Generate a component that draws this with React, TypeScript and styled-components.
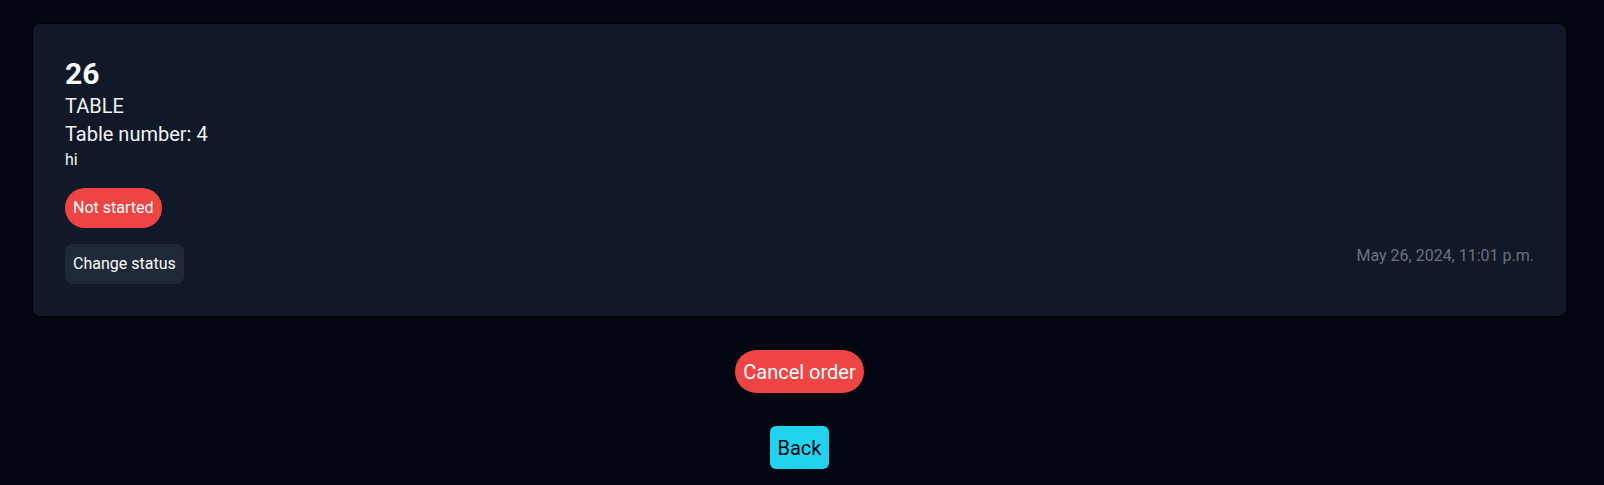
import React from "react";
import styled, { createGlobalStyle } from "styled-components";

const Global = createGlobalStyle`
  html, body {
    margin: 0;
    padding: 0;
    background: #030712;
  }
  body {
    font-family: Roboto, "Noto Sans", Arial, sans-serif;
    color: #f3f4f6;
  }
  * { box-sizing: border-box; }
`;

const Page = styled.main`
  min-height: 485px;
  padding: 23px 37px 16px 32px;
  display: flex;
  flex-direction: column;
  align-items: center;
`;

const Card = styled.section`
  align-self: stretch;
  background: #111827;
  border: 1px solid #000;
  border-radius: 8px;
  padding: 32px;
  display: flex;
  flex-direction: column;
`;

const Number = styled.h2`
  margin: 0;
  font-size: 30px;
  line-height: 36px;
  font-weight: 700;
  color: #f9fafb;
`;

const Line = styled.p<{ $size: number; $lh: number }>`
  margin: 0;
  font-size: ${(p) => p.$size}px;
  line-height: ${(p) => p.$lh}px;
  color: #f3f4f6;
`;

const Pill = styled.span`
  align-self: flex-start;
  margin-top: 16px;
  background: #ef4444;
  color: #fff;
  border-radius: 9999px;
  padding: 8px;
  font-size: 16px;
  line-height: 24px;
`;

const Footer = styled.div`
  margin-top: 16px;
  display: flex;
  justify-content: space-between;
  align-items: flex-start;
`;

const StatusButton = styled.button`
  background: #1f2937;
  color: #f9fafb;
  border: none;
  border-radius: 8px;
  padding: 8px;
  font-family: inherit;
  font-size: 16px;
  line-height: 24px;
  cursor: pointer;
`;

const DateText = styled.span`
  color: #6b7280;
  font-size: 16px;
  line-height: 24px;
`;

const ActionButton = styled.button<{ $variant: "danger" | "back" }>`
  margin-top: 33px;
  border: none;
  font-family: inherit;
  font-size: 20px;
  line-height: 28px;
  padding: 8px 8px 7px;
  cursor: pointer;
  background: ${(p) => (p.$variant === "danger" ? "#ef4444" : "#22d3ee")};
  color: ${(p) => (p.$variant === "danger" ? "#ffffff" : "#030712")};
  border-radius: ${(p) => (p.$variant === "danger" ? "9999px" : "6px")};
`;

export default function App() {
  return (
    <>
      <Global />
      <Page>
        <Card>
          <Number>26</Number>
          <Line $size={20} $lh={28}>TABLE</Line>
          <Line $size={20} $lh={28}>Table number: 4</Line>
          <Line $size={16} $lh={24}>hi</Line>
          <Pill>Not started</Pill>
          <Footer>
            <StatusButton>Change status</StatusButton>
            <DateText>May 26, 2024, 11:01 p.m.</DateText>
          </Footer>
        </Card>
        <ActionButton $variant="danger">Cancel order</ActionButton>
        <ActionButton $variant="back">Back</ActionButton>
      </Page>
    </>
  );
}
